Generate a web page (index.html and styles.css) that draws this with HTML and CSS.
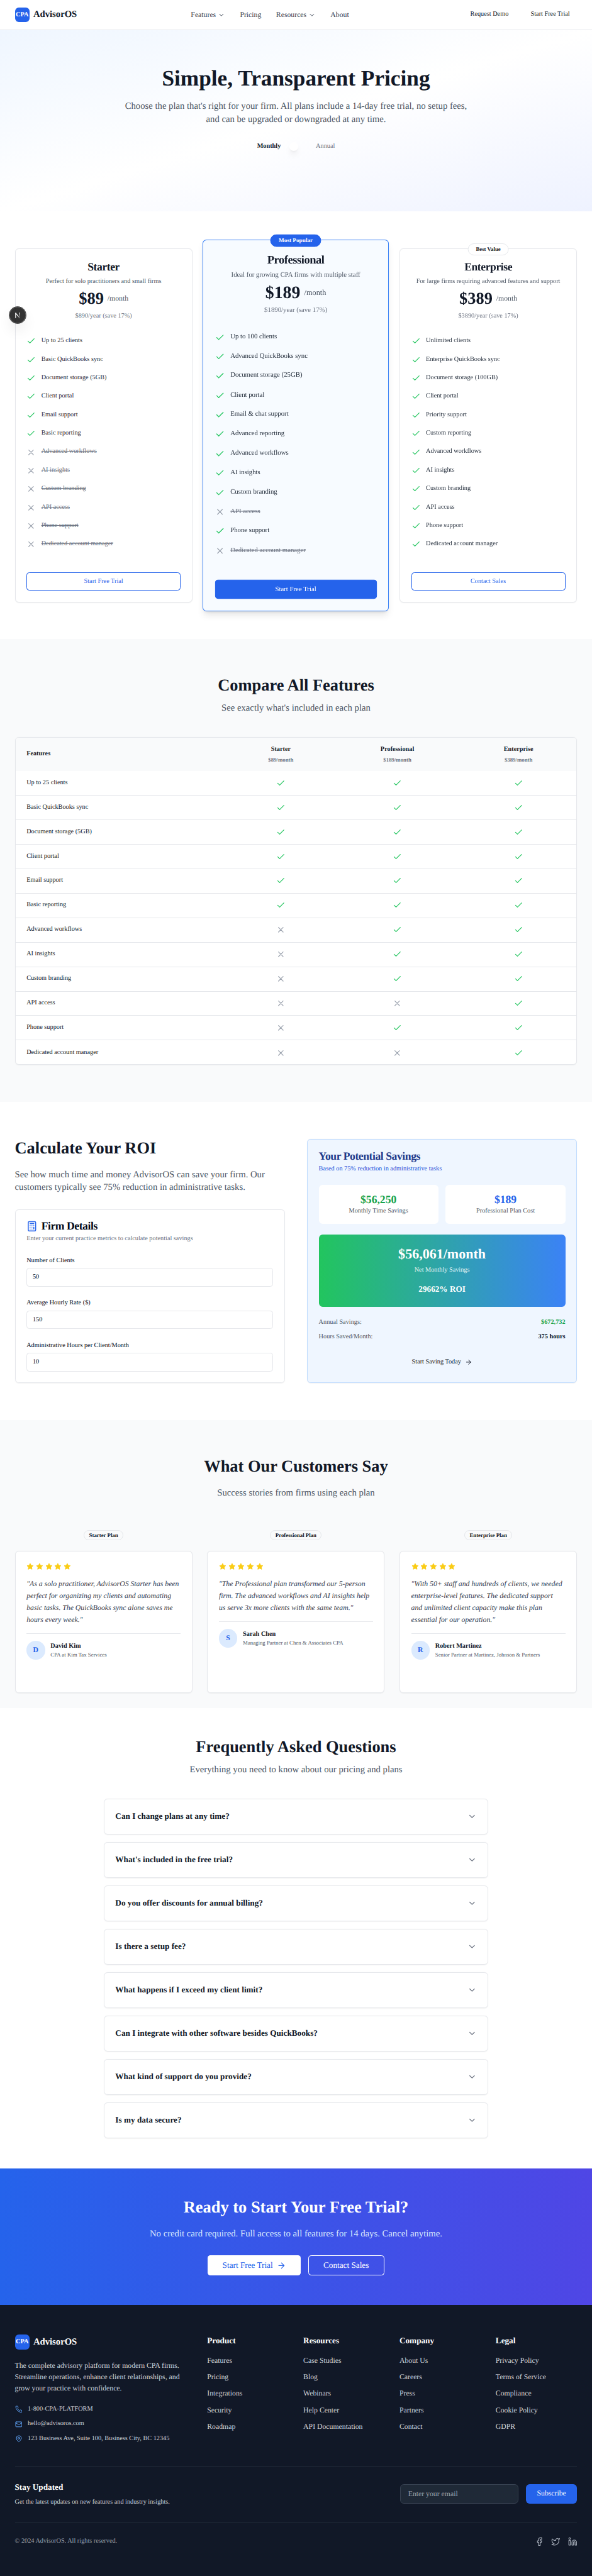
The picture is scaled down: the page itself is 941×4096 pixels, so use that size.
FILE: index.html
```html
<!DOCTYPE html>
<html lang="en">
<head>
<meta charset="utf-8">
<title>AdvisorOS Pricing</title>
<link rel="stylesheet" href="styles.css">
</head>
<body>
<svg class="sprite" xmlns="http://www.w3.org/2000/svg">
  <symbol id="check" viewBox="0 0 24 24"><path d="M20 6 9 17l-5-5"/></symbol>
  <symbol id="x" viewBox="0 0 24 24"><path d="M18 6 6 18M6 6l12 12"/></symbol>
  <symbol id="chevron" viewBox="0 0 24 24"><path d="m6 9 6 6 6-6"/></symbol>
  <symbol id="arrow" viewBox="0 0 24 24"><path d="M5 12h14M12 5l7 7-7 7"/></symbol>
  <symbol id="calculator" viewBox="0 0 24 24"><rect width="16" height="20" x="4" y="2" rx="2"/><path d="M8 6h8M16 14v4M16 10h.01M12 10h.01M8 10h.01M12 14h.01M8 14h.01M12 18h.01M8 18h.01"/></symbol>
  <symbol id="star" viewBox="0 0 24 24"><path d="M12 2l3.09 6.26L22 9.27l-5 4.87 1.18 6.88L12 17.77l-6.18 3.25L7 14.14 2 9.27l6.91-1.01z"/></symbol>
  <symbol id="phone" viewBox="0 0 24 24"><path d="M22 16.92v3a2 2 0 0 1-2.18 2 19.79 19.79 0 0 1-8.63-3.07 19.5 19.5 0 0 1-6-6 19.79 19.79 0 0 1-3.07-8.67A2 2 0 0 1 4.11 2h3a2 2 0 0 1 2 1.72 12.84 12.84 0 0 0 .7 2.81 2 2 0 0 1-.45 2.11L8.09 9.91a16 16 0 0 0 6 6l1.27-1.27a2 2 0 0 1 2.11-.45 12.84 12.84 0 0 0 2.81.7A2 2 0 0 1 22 16.92z"/></symbol>
  <symbol id="mail" viewBox="0 0 24 24"><rect width="20" height="16" x="2" y="4" rx="2"/><path d="m22 7-8.97 5.7a1.94 1.94 0 0 1-2.06 0L2 7"/></symbol>
  <symbol id="pin" viewBox="0 0 24 24"><path d="M20 10c0 6-8 12-8 12s-8-6-8-12a8 8 0 0 1 16 0Z"/><circle cx="12" cy="10" r="3"/></symbol>
  <symbol id="facebook" viewBox="0 0 24 24"><path d="M18 2h-3a5 5 0 0 0-5 5v3H7v4h3v8h4v-8h3l1-4h-4V7a1 1 0 0 1 1-1h3z"/></symbol>
  <symbol id="twitter" viewBox="0 0 24 24"><path d="M22 4s-.7 2.1-2 3.4c1.6 10-9.4 17.3-18 11.6 2.2.1 4.4-.6 6-2C3 15.5.5 9.6 3 5c2.2 2.6 5.6 4.1 9 4-.9-4.2 4-6.6 7-3.8 1.1 0 3-1.2 3-1.2z"/></symbol>
  <symbol id="linkedin" viewBox="0 0 24 24"><path d="M16 8a6 6 0 0 1 6 6v7h-4v-7a2 2 0 0 0-4 0v7h-4v-7a6 6 0 0 1 6-6z"/><rect width="4" height="12" x="2" y="9"/><circle cx="4" cy="4" r="2"/></symbol>
</svg>

<div class="page">
  <header class="topbar">
    <a class="brand"><span class="brand-mark">CPA</span><span class="brand-name">AdvisorOS</span></a>
    <nav class="nav">
      <a>Features<svg class="icon i16"><use href="#chevron"/></svg></a>
      <a>Pricing</a>
      <a>Resources<svg class="icon i16"><use href="#chevron"/></svg></a>
      <a>About</a>
    </nav>
    <div class="top-actions"><a>Request Demo</a><a>Start Free Trial</a></div>
  </header>

  <section class="hero">
    <h1>Simple, Transparent Pricing</h1>
    <p>Choose the plan that's right for your firm. All plans include a 14-day free trial, no setup fees, and can be upgraded or downgraded at any time.</p>
    <div class="billing"><span class="on">Monthly</span><span class="switch"><i></i></span><span class="off">Annual</span></div>
  </section>

  <section class="plans">
    <article class="plan">
      <h3>Starter</h3>
      <p class="desc">Perfect for solo practitioners and small firms</p>
      <div class="price"><b>$89</b><span>/month</span></div>
      <p class="yearly">$890/year (save 17%)</p>
      <ul>
        <li><svg class="icon i20"><use href="#check"/></svg>Up to 25 clients</li>
        <li><svg class="icon i20"><use href="#check"/></svg>Basic QuickBooks sync</li>
        <li><svg class="icon i20"><use href="#check"/></svg>Document storage (5GB)</li>
        <li><svg class="icon i20"><use href="#check"/></svg>Client portal</li>
        <li><svg class="icon i20"><use href="#check"/></svg>Email support</li>
        <li><svg class="icon i20"><use href="#check"/></svg>Basic reporting</li>
        <li class="no"><svg class="icon i20"><use href="#x"/></svg><s>Advanced workflows</s></li>
        <li class="no"><svg class="icon i20"><use href="#x"/></svg><s>AI insights</s></li>
        <li class="no"><svg class="icon i20"><use href="#x"/></svg><s>Custom branding</s></li>
        <li class="no"><svg class="icon i20"><use href="#x"/></svg><s>API access</s></li>
        <li class="no"><svg class="icon i20"><use href="#x"/></svg><s>Phone support</s></li>
        <li class="no"><svg class="icon i20"><use href="#x"/></svg><s>Dedicated account manager</s></li>
      </ul>
      <a class="btn">Start Free Trial</a>
    </article>
    <article class="plan popular">
      <span class="tag solid">Most Popular</span>
      <h3>Professional</h3>
      <p class="desc">Ideal for growing CPA firms with multiple staff</p>
      <div class="price"><b>$189</b><span>/month</span></div>
      <p class="yearly">$1890/year (save 17%)</p>
      <ul>
        <li><svg class="icon i20"><use href="#check"/></svg>Up to 100 clients</li>
        <li><svg class="icon i20"><use href="#check"/></svg>Advanced QuickBooks sync</li>
        <li><svg class="icon i20"><use href="#check"/></svg>Document storage (25GB)</li>
        <li><svg class="icon i20"><use href="#check"/></svg>Client portal</li>
        <li><svg class="icon i20"><use href="#check"/></svg>Email &amp; chat support</li>
        <li><svg class="icon i20"><use href="#check"/></svg>Advanced reporting</li>
        <li><svg class="icon i20"><use href="#check"/></svg>Advanced workflows</li>
        <li><svg class="icon i20"><use href="#check"/></svg>AI insights</li>
        <li><svg class="icon i20"><use href="#check"/></svg>Custom branding</li>
        <li class="no"><svg class="icon i20"><use href="#x"/></svg><s>API access</s></li>
        <li><svg class="icon i20"><use href="#check"/></svg>Phone support</li>
        <li class="no"><svg class="icon i20"><use href="#x"/></svg><s>Dedicated account manager</s></li>
      </ul>
      <a class="btn solid">Start Free Trial</a>
    </article>
    <article class="plan">
      <span class="tag">Best Value</span>
      <h3>Enterprise</h3>
      <p class="desc">For large firms requiring advanced features and support</p>
      <div class="price"><b>$389</b><span>/month</span></div>
      <p class="yearly">$3890/year (save 17%)</p>
      <ul>
        <li><svg class="icon i20"><use href="#check"/></svg>Unlimited clients</li>
        <li><svg class="icon i20"><use href="#check"/></svg>Enterprise QuickBooks sync</li>
        <li><svg class="icon i20"><use href="#check"/></svg>Document storage (100GB)</li>
        <li><svg class="icon i20"><use href="#check"/></svg>Client portal</li>
        <li><svg class="icon i20"><use href="#check"/></svg>Priority support</li>
        <li><svg class="icon i20"><use href="#check"/></svg>Custom reporting</li>
        <li><svg class="icon i20"><use href="#check"/></svg>Advanced workflows</li>
        <li><svg class="icon i20"><use href="#check"/></svg>AI insights</li>
        <li><svg class="icon i20"><use href="#check"/></svg>Custom branding</li>
        <li><svg class="icon i20"><use href="#check"/></svg>API access</li>
        <li><svg class="icon i20"><use href="#check"/></svg>Phone support</li>
        <li><svg class="icon i20"><use href="#check"/></svg>Dedicated account manager</li>
      </ul>
      <a class="btn">Contact Sales</a>
    </article>
  </section>

  <section class="compare">
    <h2>Compare All Features</h2>
    <p class="lead">See exactly what's included in each plan</p>
    <div class="table">
      <div class="row head"><b>Features</b><div><b>Starter</b><small>$89/month</small></div><div><b>Professional</b><small>$189/month</small></div><div><b>Enterprise</b><small>$389/month</small></div></div>
      <div class="row"><span>Up to 25 clients</span><svg class="icon i20 yes"><use href="#check"/></svg><svg class="icon i20 yes"><use href="#check"/></svg><svg class="icon i20 yes"><use href="#check"/></svg></div>
      <div class="row"><span>Basic QuickBooks sync</span><svg class="icon i20 yes"><use href="#check"/></svg><svg class="icon i20 yes"><use href="#check"/></svg><svg class="icon i20 yes"><use href="#check"/></svg></div>
      <div class="row"><span>Document storage (5GB)</span><svg class="icon i20 yes"><use href="#check"/></svg><svg class="icon i20 yes"><use href="#check"/></svg><svg class="icon i20 yes"><use href="#check"/></svg></div>
      <div class="row"><span>Client portal</span><svg class="icon i20 yes"><use href="#check"/></svg><svg class="icon i20 yes"><use href="#check"/></svg><svg class="icon i20 yes"><use href="#check"/></svg></div>
      <div class="row"><span>Email support</span><svg class="icon i20 yes"><use href="#check"/></svg><svg class="icon i20 yes"><use href="#check"/></svg><svg class="icon i20 yes"><use href="#check"/></svg></div>
      <div class="row"><span>Basic reporting</span><svg class="icon i20 yes"><use href="#check"/></svg><svg class="icon i20 yes"><use href="#check"/></svg><svg class="icon i20 yes"><use href="#check"/></svg></div>
      <div class="row"><span>Advanced workflows</span><svg class="icon i20"><use href="#x"/></svg><svg class="icon i20 yes"><use href="#check"/></svg><svg class="icon i20 yes"><use href="#check"/></svg></div>
      <div class="row"><span>AI insights</span><svg class="icon i20"><use href="#x"/></svg><svg class="icon i20 yes"><use href="#check"/></svg><svg class="icon i20 yes"><use href="#check"/></svg></div>
      <div class="row"><span>Custom branding</span><svg class="icon i20"><use href="#x"/></svg><svg class="icon i20 yes"><use href="#check"/></svg><svg class="icon i20 yes"><use href="#check"/></svg></div>
      <div class="row"><span>API access</span><svg class="icon i20"><use href="#x"/></svg><svg class="icon i20"><use href="#x"/></svg><svg class="icon i20 yes"><use href="#check"/></svg></div>
      <div class="row"><span>Phone support</span><svg class="icon i20"><use href="#x"/></svg><svg class="icon i20 yes"><use href="#check"/></svg><svg class="icon i20 yes"><use href="#check"/></svg></div>
      <div class="row"><span>Dedicated account manager</span><svg class="icon i20"><use href="#x"/></svg><svg class="icon i20"><use href="#x"/></svg><svg class="icon i20 yes"><use href="#check"/></svg></div>
    </div>
  </section>

  <section class="roi">
    <div class="roi-left">
      <h2>Calculate Your ROI</h2>
      <p class="lead">See how much time and money AdvisorOS can save your firm. Our customers typically see 75% reduction in administrative tasks.</p>
      <div class="firm">
        <h3><svg class="icon i24"><use href="#calculator"/></svg>Firm Details</h3>
        <p class="sub">Enter your current practice metrics to calculate potential savings</p>
        <div class="field"><label>Number of Clients</label><div class="input">50</div></div>
        <div class="field"><label>Average Hourly Rate ($)</label><div class="input">150</div></div>
        <div class="field"><label>Administrative Hours per Client/Month</label><div class="input">10</div></div>
      </div>
    </div>
    <div class="savings">
      <h3>Your Potential Savings</h3>
      <p class="sub">Based on 75% reduction in administrative tasks</p>
      <div class="stats">
        <div><b class="green">$56,250</b><span>Monthly Time Savings</span></div>
        <div><b class="blue">$189</b><span>Professional Plan Cost</span></div>
      </div>
      <div class="net"><b>$56,061/month</b><span>Net Monthly Savings</span><strong>29662% ROI</strong></div>
      <div class="line"><span>Annual Savings:</span><b class="green">$672,732</b></div>
      <div class="line"><span>Hours Saved/Month:</span><b>375 hours</b></div>
      <a class="save-btn">Start Saving Today<svg class="icon i16"><use href="#arrow"/></svg></a>
    </div>
  </section>

  <section class="stories">
    <h2>What Our Customers Say</h2>
    <p class="lead">Success stories from firms using each plan</p>
    <div class="story-grid">
      <div class="story">
        <span class="pill">Starter Plan</span>
        <article>
          <div class="stars"><svg><use href="#star"/></svg><svg><use href="#star"/></svg><svg><use href="#star"/></svg><svg><use href="#star"/></svg><svg><use href="#star"/></svg></div>
          <p>"As a solo practitioner, AdvisorOS Starter has been perfect for organizing my clients and automating basic tasks. The QuickBooks sync alone saves me hours every week."</p>
          <div class="author"><i>D</i><div><b>David Kim</b><span>CPA at Kim Tax Services</span></div></div>
        </article>
      </div>
      <div class="story">
        <span class="pill">Professional Plan</span>
        <article>
          <div class="stars"><svg><use href="#star"/></svg><svg><use href="#star"/></svg><svg><use href="#star"/></svg><svg><use href="#star"/></svg><svg><use href="#star"/></svg></div>
          <p>"The Professional plan transformed our 5-person firm. The advanced workflows and AI insights help us serve 3x more clients with the same team."</p>
          <div class="author"><i>S</i><div><b>Sarah Chen</b><span>Managing Partner at Chen &amp; Associates CPA</span></div></div>
        </article>
      </div>
      <div class="story">
        <span class="pill">Enterprise Plan</span>
        <article>
          <div class="stars"><svg><use href="#star"/></svg><svg><use href="#star"/></svg><svg><use href="#star"/></svg><svg><use href="#star"/></svg><svg><use href="#star"/></svg></div>
          <p>"With 50+ staff and hundreds of clients, we needed enterprise-level features. The dedicated support and unlimited client capacity make this plan essential for our operation."</p>
          <div class="author"><i>R</i><div><b>Robert Martinez</b><span>Senior Partner at Martinez, Johnson &amp; Partners</span></div></div>
        </article>
      </div>
    </div>
  </section>

  <section class="faq">
    <h2>Frequently Asked Questions</h2>
    <p class="lead">Everything you need to know about our pricing and plans</p>
    <div class="faq-list">
      <div>Can I change plans at any time?<svg class="icon i20"><use href="#chevron"/></svg></div>
      <div>What's included in the free trial?<svg class="icon i20"><use href="#chevron"/></svg></div>
      <div>Do you offer discounts for annual billing?<svg class="icon i20"><use href="#chevron"/></svg></div>
      <div>Is there a setup fee?<svg class="icon i20"><use href="#chevron"/></svg></div>
      <div>What happens if I exceed my client limit?<svg class="icon i20"><use href="#chevron"/></svg></div>
      <div>Can I integrate with other software besides QuickBooks?<svg class="icon i20"><use href="#chevron"/></svg></div>
      <div>What kind of support do you provide?<svg class="icon i20"><use href="#chevron"/></svg></div>
      <div>Is my data secure?<svg class="icon i20"><use href="#chevron"/></svg></div>
    </div>
  </section>

  <section class="cta">
    <h2>Ready to Start Your Free Trial?</h2>
    <p>No credit card required. Full access to all features for 14 days. Cancel anytime.</p>
    <div class="cta-actions">
      <a class="white">Start Free Trial<svg class="icon i20"><use href="#arrow"/></svg></a>
      <a class="ghost">Contact Sales</a>
    </div>
  </section>

  <footer class="footer">
    <div class="foot-grid">
      <div class="foot-about">
        <a class="brand"><span class="brand-mark">CPA</span><span class="brand-name">AdvisorOS</span></a>
        <p>The complete advisory platform for modern CPA firms. Streamline operations, enhance client relationships, and grow your practice with confidence.</p>
        <div class="contact">
          <span><svg class="icon i16"><use href="#phone"/></svg>1-800-CPA-PLATFORM</span>
          <span><svg class="icon i16"><use href="#mail"/></svg>hello@advisoros.com</span>
          <span><svg class="icon i16"><use href="#pin"/></svg>123 Business Ave, Suite 100, Business City, BC 12345</span>
        </div>
      </div>
      <div class="foot-col"><h4>Product</h4><a>Features</a><a>Pricing</a><a>Integrations</a><a>Security</a><a>Roadmap</a></div>
      <div class="foot-col"><h4>Resources</h4><a>Case Studies</a><a>Blog</a><a>Webinars</a><a>Help Center</a><a>API Documentation</a></div>
      <div class="foot-col"><h4>Company</h4><a>About Us</a><a>Careers</a><a>Press</a><a>Partners</a><a>Contact</a></div>
      <div class="foot-col"><h4>Legal</h4><a>Privacy Policy</a><a>Terms of Service</a><a>Compliance</a><a>Cookie Policy</a><a>GDPR</a></div>
    </div>
    <div class="newsletter">
      <div><h4>Stay Updated</h4><p>Get the latest updates on new features and industry insights.</p></div>
      <div class="signup"><div class="email">Enter your email</div><a>Subscribe</a></div>
    </div>
    <div class="legal">
      <span>© 2024 AdvisorOS. All rights reserved.</span>
      <div class="social"><svg class="icon i20"><use href="#facebook"/></svg><svg class="icon i20"><use href="#twitter"/></svg><svg class="icon i20"><use href="#linkedin"/></svg></div>
    </div>
  </footer>

  <div class="dev-badge">
    <svg viewBox="0 0 36 36" fill="none" stroke-width="1.7">
      <defs>
        <linearGradient id="fadeA" gradientUnits="userSpaceOnUse" x1="18" y1="18" x2="23.5" y2="25"><stop offset="0" stop-color="#fff"/><stop offset="1" stop-color="#fff" stop-opacity=".1"/></linearGradient>
        <linearGradient id="fadeB" gradientUnits="userSpaceOnUse" x1="22" y1="12" x2="22" y2="22"><stop offset="0" stop-color="#fff"/><stop offset="1" stop-color="#fff" stop-opacity=".1"/></linearGradient>
      </defs>
      <path stroke="#fff" d="M13.4 24.2V13.2"/><path stroke="url(#fadeA)" d="M13 12.8l9.6 12"/><path stroke="url(#fadeB)" d="M22.2 12.4v10"/>
    </svg>
  </div>
</div>
</body>
</html>
```
FILE: styles.css
```css
* { box-sizing: border-box; margin: 0; padding: 0; }
body { background: #fff; overflow-x: hidden; }

/* Designed on a 1280px canvas, shown at 73.5% */
.page {
  position: relative;
  zoom: 0.73496;
  width: 1280.3px;
  font: 16px/24px "Liberation Serif", "Times New Roman", serif;
  text-rendering: geometricPrecision;
  color: #111827;
  background: #fff;
}
.sprite { position: absolute; width: 0; height: 0; }
.icon { flex: none; fill: none; stroke: currentColor; stroke-width: 2; stroke-linecap: round; stroke-linejoin: round; }
.i16 { width: 16px; height: 16px; }
.i20 { width: 20px; height: 20px; }
.i24 { width: 24px; height: 24px; }
ul { list-style: none; }
h2 { font-size: 36px; line-height: 40px; font-weight: 700; }
.lead { font-size: 20px; line-height: 28px; color: #4b5563; }
.green { color: #16a34a; }
.blue { color: #2563eb; }

/* Header */
.topbar { height: 65px; padding: 0 32px; display: flex; align-items: center; justify-content: space-between; border-bottom: 1px solid #e5e7eb; }
.brand { display: flex; align-items: center; gap: 8px; }
.brand-mark { width: 32px; height: 32px; border-radius: 8px; background: #2563eb; color: #fff; font-weight: 700; font-size: 14px; line-height: 32px; text-align: center; }
.brand-name { font-size: 20px; line-height: 28px; font-weight: 700; }
.nav { display: flex; gap: 32px; color: #374151; }
.nav a { display: flex; align-items: center; gap: 4px; }
.top-actions { display: flex; gap: 16px; font-size: 14px; line-height: 20px; }
.top-actions a { padding: 0 16px; }

/* Hero */
.hero { height: 392px; padding-top: 80px; text-align: center; background: linear-gradient(to bottom right, #eff6ff, #fff, #eef2ff); }
.hero h1 { font-size: 48px; line-height: 48px; margin-bottom: 24px; }
.hero p { width: 768px; margin: 0 auto 32px; font-size: 20px; line-height: 28px; color: #4b5563; }
.billing { display: flex; justify-content: center; align-items: center; gap: 16px; height: 24px; font-size: 14px; line-height: 20px; }
.billing .on { font-weight: 700; }
.billing .off { color: #6b7280; }
.switch { width: 44px; height: 24px; padding: 2px; }
.switch i { display: block; width: 20px; height: 20px; border-radius: 50%; background: #fff; box-shadow: 0 10px 15px -3px rgba(0,0,0,.1), 0 4px 6px -4px rgba(0,0,0,.1); }

/* Plans */
.plans { height: 926px; padding: 80px 32px; display: grid; grid-template-columns: repeat(3, 384px); gap: 32px; }
.plan { position: relative; height: 766px; padding: 24px; display: flex; flex-direction: column; border: 1px solid #e5e7eb; border-radius: 8px; background: #fff; text-align: center; box-shadow: 0 1px 2px rgba(0,0,0,.05); font-size: 14px; line-height: 20px; }
.plan.popular { transform: scale(1.05); border-color: #3b82f6; background: #f7fbff; box-shadow: 0 10px 15px -3px rgba(0,0,0,.1), 0 4px 6px -4px rgba(0,0,0,.1); }
.tag { position: absolute; top: -12px; left: 50%; transform: translateX(-50%); height: 26px; padding: 0 16px; border: 1px solid #e5e7eb; border-radius: 13px; background: #fff; font-size: 12px; line-height: 24px; font-weight: 700; white-space: nowrap; }
.tag.solid { background: #2563eb; border-color: #2563eb; color: #fff; }
.plan h3 { font-size: 24px; line-height: 32px; letter-spacing: -0.6px; margin-bottom: 6px; }
.plan .desc { color: #4b5563; margin-bottom: 6px; }
.price { display: flex; justify-content: center; align-items: center; gap: 8px; margin-bottom: 8px; }
.price b { font-size: 36px; line-height: 40px; }
.price span { font-size: 16px; line-height: 24px; color: #4b5563; }
.yearly { color: #6b7280; margin-bottom: 32px; }
.plan ul { display: grid; gap: 16px; grid-auto-rows: 24px; }
.plan li { display: flex; align-items: center; gap: 12px; color: #1f2937; }
.plan li .icon { color: #22c55e; }
.plan li.no { color: #6b7280; }
.plan li.no .icon { color: #9ca3af; }
.btn { margin-top: auto; height: 40px; line-height: 38px; border: 1px solid #2563eb; border-radius: 6px; color: #2563eb; }
.btn.solid { background: #2563eb; color: #fff; }

/* Comparison */
.compare { height: 1001px; padding: 80px 32px; background: #f9fafb; text-align: center; }
.compare h2 { margin-bottom: 16px; }
.table { height: 709px; margin-top: 48px; overflow: hidden; border: 1px solid #e5e7eb; border-radius: 8px; background: #fff; box-shadow: 0 1px 2px rgba(0,0,0,.05); font-size: 14px; line-height: 20px; }
.row { height: 53px; display: grid; grid-template-columns: 458px 232px 272px 252px; align-items: center; justify-items: center; border-bottom: 1px solid #e5e7eb; }
.row:last-child { border-bottom: 0; }
.row > :first-child { justify-self: start; padding-left: 24px; }
.row.head { height: 72px; background: #f9fafb; border-bottom: 0; }
.row small { display: block; margin-top: 4px; font-size: 12px; line-height: 16px; font-weight: 700; color: #6b7280; }
.row div b { display: block; }
.row .icon { color: #9ca3af; }
.row .icon.yes { color: #22c55e; }

/* ROI */
.roi { height: 688px; padding: 80px 32px; display: grid; grid-template-columns: 584px 584px; gap: 48px; font-size: 14px; line-height: 20px; }
.roi h2 { margin-bottom: 24px; }
.roi h3 { display: flex; gap: 8px; font-size: 24px; line-height: 24px; letter-spacing: -0.6px; margin-bottom: 6px; }
.firm { height: 376px; margin-top: 32px; padding: 24px; border: 1px solid #e5e7eb; border-radius: 8px; box-shadow: 0 1px 2px rgba(0,0,0,.05); color: #020817; }
.firm h3 .icon { color: #2563eb; }
.firm .sub { color: #6b7280; margin-bottom: 24px; }
.field { height: 68px; margin-bottom: 24px; }
.field label { display: block; height: 28px; padding-top: 3px; }
.input { height: 40px; padding: 0 12px; line-height: 38px; border: 1px solid #e5e7eb; border-radius: 6px; }
.savings { height: 528px; padding: 24px; border: 1px solid #bfdbfe; border-radius: 8px; background: #eff6ff; box-shadow: 0 1px 2px rgba(0,0,0,.05); }
.savings h3 { color: #1e3a8a; }
.savings .sub { color: #1d4ed8; margin-bottom: 24px; }
.stats { display: grid; grid-template-columns: 1fr 1fr; gap: 16px; text-align: center; }
.stats div { height: 84px; padding: 16px; border-radius: 8px; background: #fff; }
.stats b { display: block; font-size: 24px; line-height: 32px; }
.stats span, .line span { color: #4b5563; }
.net { height: 156px; margin: 24px 0; padding: 24px; display: grid; justify-items: center; align-content: start; border-radius: 8px; color: #fff; background: linear-gradient(to right, #22c55e, #3b82f6); }
.net b { font-size: 30px; line-height: 36px; }
.net span { margin: 8px 0 16px; opacity: .9; }
.net strong { font-size: 18px; line-height: 28px; }
.line { display: flex; justify-content: space-between; margin-bottom: 12px; color: #020817; }
.save-btn { height: 40px; margin-top: 24px; display: flex; justify-content: center; align-items: center; gap: 8px; }

/* Testimonials */
.stories { height: 623px; padding: 80px 32px; background: #f9fafb; text-align: center; }
.stories h2 { margin-bottom: 24px; }
.story-grid { height: 307px; margin-top: 64px; display: grid; grid-template-columns: repeat(3, 384px); gap: 32px; }
.story { display: flex; flex-direction: column; align-items: center; }
.pill { height: 22px; margin: 2px 0 24px; padding: 0 10px; border: 1px solid #e5e7eb; border-radius: 11px; font-size: 12px; line-height: 20px; font-weight: 700; }
.story article { flex: none; width: 384px; height: 307px; padding: 24px; border: 1px solid #e5e7eb; border-radius: 8px; background: #fff; box-shadow: 0 1px 2px rgba(0,0,0,.05); text-align: left; }
.stars { display: flex; gap: 4px; margin-bottom: 16px; }
.stars svg { width: 16px; height: 16px; fill: #facc15; stroke: #facc15; stroke-width: 2; stroke-linejoin: round; }
.story p { line-height: 26px; font-style: italic; color: #374151; margin-bottom: 16px; }
.author { display: flex; align-items: center; gap: 12px; padding-top: 16px; border-top: 1px solid #e5e7eb; }
.author i { width: 40px; height: 40px; border-radius: 50%; background: #dbeafe; color: #2563eb; font-style: normal; font-weight: 700; line-height: 40px; text-align: center; }
.author b { display: block; font-size: 14px; line-height: 20px; }
.author span { display: block; font-size: 12px; line-height: 16px; color: #4b5563; }

/* FAQ */
.faq { height: 996px; padding-top: 64px; text-align: center; }
.faq h2 { margin-bottom: 16px; }
.faq-list { width: 832px; margin: 48px auto 0; display: grid; gap: 16px; grid-auto-rows: 78px; }
.faq-list div { display: flex; justify-content: space-between; align-items: center; padding: 0 24px; border: 1px solid #e5e7eb; border-radius: 8px; box-shadow: 0 1px 2px rgba(0,0,0,.05); font-size: 18px; line-height: 28px; font-weight: 700; }
.faq-list .icon { color: #6b7280; }

/* Call to action */
.cta { height: 296px; padding-top: 64px; text-align: center; color: #fff; background: linear-gradient(to right, #2563eb, #4f46e5); }
.cta p { margin: 24px 0 32px; font-size: 20px; line-height: 28px; color: #dbeafe; }
.cta-actions { display: flex; justify-content: center; gap: 16px; font-size: 18px; line-height: 28px; }
.cta-actions a { height: 44px; padding: 0 32px; display: flex; align-items: center; gap: 8px; border-radius: 6px; }
.cta-actions .white { background: #fff; color: #2563eb; }
.cta-actions .ghost { border: 1px solid #fff; }

/* Footer */
.footer { height: 586px; padding: 64px 32px 0; background: #111827; color: #d1d5db; }
.footer .brand-name, .footer h4 { color: #fff; }
.foot-grid { height: 284px; display: grid; grid-template-columns: 384px repeat(4, 176px); gap: 32px; }
.foot-about p { margin: 24px 0; }
.contact { display: grid; gap: 12px; font-size: 14px; line-height: 20px; }
.contact span { display: flex; align-items: center; gap: 12px; }
.contact .icon { color: #60a5fa; }
.footer h4 { font-size: 18px; line-height: 28px; }
.foot-col h4 { margin-bottom: 16px; }
.foot-col a { display: block; margin-bottom: 12px; }
.newsletter { height: 121px; padding: 32px 0; display: flex; justify-content: space-between; align-items: center; border-top: 1px solid #1f2937; }
.newsletter p { margin-top: 8px; font-size: 14px; line-height: 20px; }
.signup { display: flex; gap: 16px; }
.email { width: 256px; height: 42px; padding: 0 16px; line-height: 40px; border: 1px solid #374151; border-radius: 8px; background: #1f2937; color: #9ca3af; }
.signup a { height: 42px; padding: 0 24px; line-height: 42px; border-radius: 8px; background: #2563eb; color: #fff; }
.legal { padding-top: 32px; display: flex; justify-content: space-between; border-top: 1px solid #1f2937; font-size: 14px; line-height: 20px; color: #9ca3af; }
.social { display: flex; gap: 16px; }

/* Floating dev-tools button */
.dev-badge { position: absolute; left: 20px; top: 664px; width: 36px; height: 36px; border-radius: 50%; background: rgba(0,0,0,.8); box-shadow: 0 0 0 1px #171717, inset 0 0 0 1px rgba(255,255,255,.14), 0 16px 32px -8px rgba(0,0,0,.24); }
.dev-badge svg { display: block; width: 36px; height: 36px; }
```
